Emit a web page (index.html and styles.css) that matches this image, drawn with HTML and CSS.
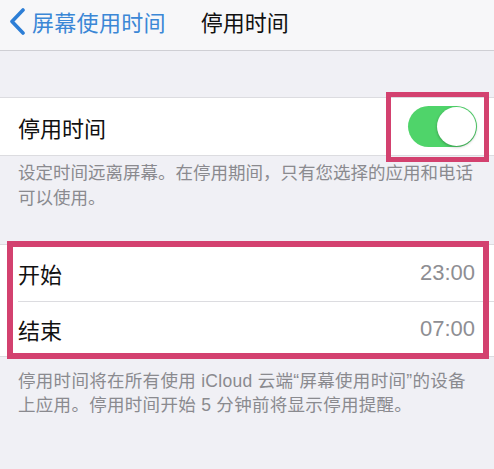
FILE: index.html
```html
<!DOCTYPE html>
<html lang="zh-CN">
<head>
<meta charset="utf-8">
<link rel="stylesheet" href="styles.css">
</head>
<body>
<div class="page">
  <header class="nav">
    <div class="back">
      <svg class="chev" width="18" height="28" viewBox="0 0 18 28"><polyline points="15,2 4,13.5 15,25" fill="none" stroke="#2d7ed6" stroke-width="3.6" stroke-linecap="round" stroke-linejoin="round"/></svg>
      <span class="back-text">屏幕使用时间</span>
    </div>
    <div class="title">停用时间</div>
  </header>

  <section class="group first">
    <div class="row">
      <span class="label">停用时间</span>
      <div class="toggle"><div class="knob"></div></div>
      <div class="mark mark-toggle"></div>
    </div>
  </section>
  <p class="note note1">设定时间远离屏幕。在停用期间，只有您选择的应用和电话可以使用。</p>

  <section class="group second">
    <div class="row row-time">
      <span class="label">开始</span>
      <span class="value">23:00</span>
    </div>
    <div class="row row-time last">
      <span class="label">结束</span>
      <span class="value">07:00</span>
    </div>
    <div class="mark mark-group"></div>
  </section>
  <p class="note note2">停用时间将在所有使用 iCloud 云端“屏幕使用时间”的设备上应用。停用时间开始 5 分钟前将显示停用提醒。</p>
</div>
</body>
</html>
```

FILE: styles.css
```css
* { box-sizing: border-box; }
html, body {
  margin: 0;
  padding: 0;
  background: #f0f0f5;
  font-family: "Noto Sans CJK SC", "Noto Sans", sans-serif;
}
.page {
  width: 494px;
  height: 469px;
  overflow: hidden;
  background: #f0f0f5;
}
.nav {
  height: 51px;
  background: #f7f7f9;
  border-bottom: 1px solid #cfcfd4;
  display: flex;
  align-items: flex-start;
  padding-top: 6px;
  padding-left: 8px;
}
.back {
  display: flex;
  align-items: center;
  color: #3b87d6;
}
.chev {
  display: block;
  margin-right: 6px;
  margin-top: 1px;
}
.back-text {
  font-size: 22px;
  line-height: 30px;
  letter-spacing: 0.3px;
}
.title {
  margin-left: 35px;
  font-size: 22px;
  line-height: 30px;
  color: #111;
}
.group {
  background: #fff;
  border-top: 1px solid #dcdce0;
  border-bottom: 1px solid #dcdce0;
  position: relative;
}
.group.first {
  margin-top: 46px;
}
.row {
  display: flex;
  align-items: center;
  justify-content: space-between;
  height: 57px;
  padding: 0 19px 0 18px;
  position: relative;
}
.label {
  font-size: 22px;
  color: #111;
}
.toggle {
  width: 69px;
  height: 41px;
  border-radius: 21px;
  background: #4fd46a;
  position: relative;
  margin-right: -2px;
}
.knob {
  position: absolute;
  right: 1px;
  top: 1px;
  width: 39px;
  height: 39px;
  border-radius: 50%;
  background: #fff;
  box-shadow: 0 1px 3px rgba(0,0,0,0.3);
}
.mark {
  position: absolute;
  border: 5px solid #d3416f;
  pointer-events: none;
}
.mark-toggle {
  left: 386px;
  right: 5px;
  top: -6px;
  bottom: -7px;
}
.note {
  margin: 0;
  color: #8a8a8f;
  font-size: 17.5px;
  line-height: 25px;
  padding: 3px 10px 0 18px;
}
.note1 {
  height: 88px;
}
.row-time {
  height: 56px;
  padding-right: 19px;
}
.row-time + .row-time::before {
  content: "";
  position: absolute;
  top: 0;
  left: 18px;
  right: 0;
  border-top: 1px solid #dcdce0;
}
.row-time.last { height: 55px; }
.value {
  font-size: 22px;
  color: #8e8e93;
  font-family: "Liberation Sans", "Noto Sans", sans-serif;
}
.mark-group {
  left: 7px;
  right: 5px;
  top: -4px;
  bottom: -3px;
  border-width: 6px;
}
.note2 {
  padding-top: 12px;
  padding-right: 20px;
  line-height: 24px;
  letter-spacing: 0.3px;
  font-family: "Liberation Sans", "Noto Sans CJK SC", sans-serif;
}
```
